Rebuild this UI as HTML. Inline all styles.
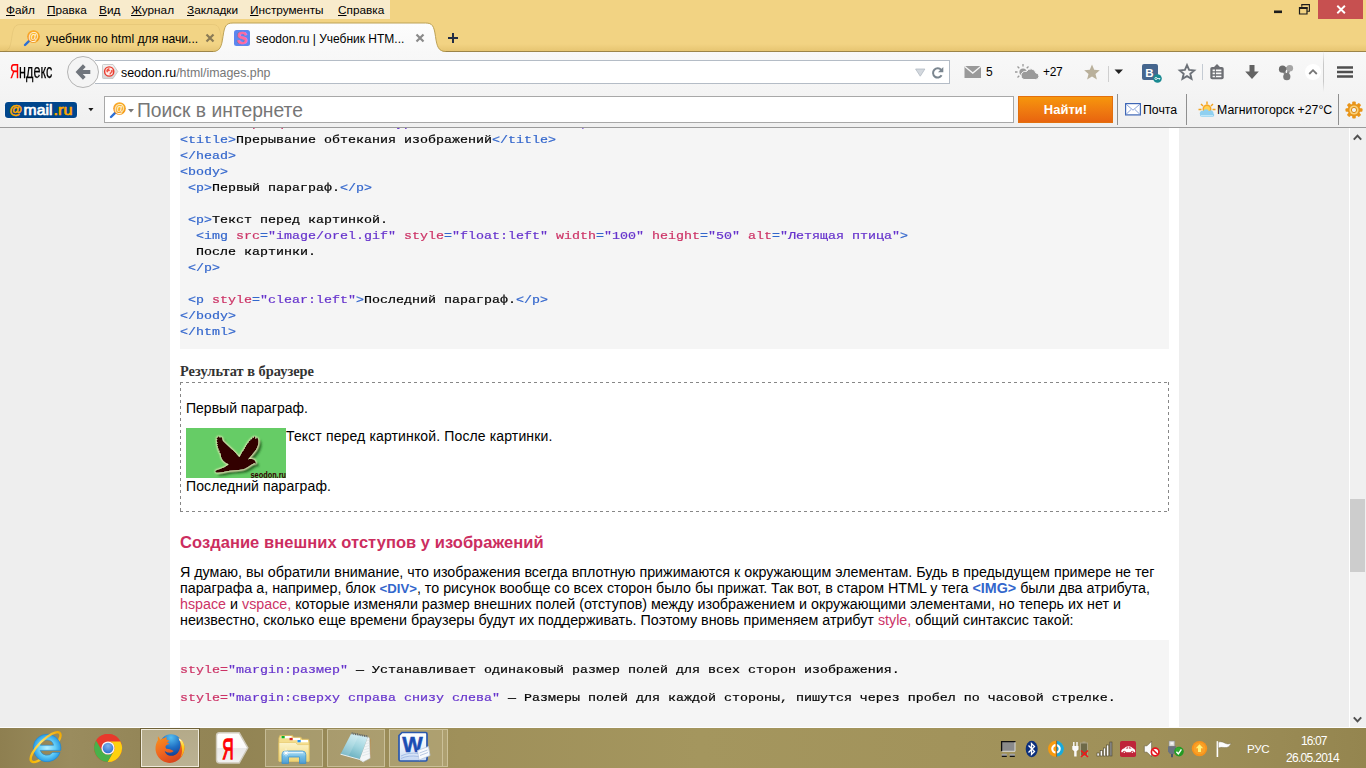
<!DOCTYPE html>
<html lang="ru">
<head>
<meta charset="utf-8">
<title>seodon.ru | Учебник HTML</title>
<style>
*{box-sizing:border-box;margin:0;padding:0}
html,body{width:1366px;height:768px;overflow:hidden;background:#f2d383;font-family:"Liberation Sans",sans-serif;}
.abs{position:absolute}
#titlebar{position:absolute;left:0;top:0;width:1366px;height:52px;background:#f2d383}
#menubar{position:absolute;left:0;top:0;width:390px;height:19px;background:#f8ebcc;font-size:11.8px;color:#000;white-space:nowrap}
#menubar span{position:absolute;top:3px;line-height:15px}
#menubar u{text-decoration:underline;text-underline-offset:1px}
#navbar{position:absolute;left:0;top:52px;width:1366px;height:41px;background:linear-gradient(180deg,#f8f8f8,#f4f4f4)}
#mailbar{position:absolute;left:0;top:93px;width:1366px;height:35px;background:linear-gradient(180deg,#f4f4f4,#f0f0f0);border-bottom:1px solid #9a9a9a}
#viewport{position:absolute;left:0;top:128px;width:1349px;height:600px;background:#eeeeee;overflow:hidden}
#col{position:absolute;left:170px;top:0;width:1009px;height:600px;background:#fff}
#scroll{position:absolute;left:1349px;top:128px;width:17px;height:600px;background:#f0f0f0;border-left:1px solid #fff}
#thumb{position:absolute;left:0;top:371px;width:15px;height:73px;background:#cdcdcd}
#taskbar{position:absolute;left:0;top:728px;width:1366px;height:40px;background:linear-gradient(90deg,#8e7f50 0,#9a8c5e 70px,#948658 140px,#928454 240px,#9f905a 460px,#a4965e 700px,#a2935b 950px,#9f9059 1150px,#998a54 1280px,#94854f 1366px)}
.code{position:absolute;left:10px;width:989px;background:#f5f5f5;font-family:"Liberation Mono",monospace;font-size:13.333px;line-height:16px;white-space:pre;color:#000}
.code .t{color:#3366cc}.code .a{color:#cc3366}.code .v{color:#6633cc}
.txt{position:absolute;white-space:nowrap;color:#000}
.ex{font-size:14px;line-height:16px}.p{font-size:14.29px;line-height:16px}.tg{color:#3366cc}.at{color:#cc3366}
.ui{font-size:12px;line-height:16px}
.tb{height:38px;background:rgba(255,250,225,.17);border:1px solid rgba(255,250,225,.36)}.tk{color:#fff;line-height:15px}
.ln{height:16px;-webkit-text-stroke:.22px;line-height:18.182px;transform:scaleY(.88);transform-origin:0 0}
</style>
</head>
<body>
<div id="titlebar"></div>
<div id="menubar">
<span style="left:6px"><u>Ф</u>айл</span>
<span style="left:47px"><u>П</u>равка</span>
<span style="left:99px"><u>В</u>ид</span>
<span style="left:131px"><u>Ж</u>урнал</span>
<span style="left:187px"><u>З</u>акладки</span>
<span style="left:250px"><u>И</u>нструменты</span>
<span style="left:338px"><u>С</u>правка</span>
</div>
<!--WINCTRL-->
<!--TABS-->
<!-- window controls -->
<div class="abs" style="left:1318px;top:0;width:45px;height:19px;background:#c75050"></div>
<svg class="abs" style="left:1266px;top:0" width="100" height="20" viewBox="0 0 100 20">
<rect x="8" y="10.5" width="8" height="2.6" fill="#1c1c1c"/>
<path d="M33.5 7.5h7.5v6.5h-7.5z M33.5 8.2h7.5" fill="none" stroke="#1c1c1c" stroke-width="1.2"/>
<rect x="33" y="7" width="8.5" height="2" fill="#1c1c1c"/>
<path d="M35.8 6.8V4.6h7.6v6.6h-2.2" fill="none" stroke="#1c1c1c" stroke-width="1.1"/>
<path d="M71.3 5.8l7.6 7.4M78.9 5.8l-7.6 7.4" stroke="#fff" stroke-width="1.9" fill="none"/>
</svg>
<!-- tab strip -->
<div class="abs" style="left:0;top:44px;width:1366px;height:7px;background:linear-gradient(180deg,rgba(226,190,105,0) 0%,rgba(222,186,100,.55) 100%)"></div>
<div class="abs" style="left:0;top:51px;width:1366px;height:1px;background:#9c8448"></div>
<svg class="abs" style="left:0;top:22px" width="480" height="30" viewBox="0 0 480 30">
<defs><linearGradient id="tg" x1="0" y1="0" x2="0" y2="1"><stop offset="0" stop-color="#fdfdfd"/><stop offset="1" stop-color="#f8f8f8"/></linearGradient></defs>
<path d="M3 29.5C10 29 10.5 24 12 14C13.5 5 15 2.5 21 2.5H212C218 2.5 219.500 5 221 14C222.500 24 223 29 230 29.500" fill="rgba(255,244,214,.03)" stroke="rgba(150,120,50,.10)" stroke-width="1"/>
<path d="M213 30C220 29.500 221.500 25 223 14.500C224.500 4 226 1 233 1H425.500C432.500 1 434 4 435.500 14.500C437 25 438.500 29.500 445.500 30Z" fill="url(#tg)"/>
<path d="M213 29.5C220 29 221.500 25 223 14.500C224.500 4 226 1 233 1H425.500C432.500 1 434 4 435.500 14.500C437 25 438.500 29 445.500 29.500" fill="none" stroke="#bda256" stroke-width="1"/>
</svg>
<svg class="abs" style="left:22px;top:29px" width="20" height="18" viewBox="0 0 20 18">
<defs><radialGradient id="og" cx=".45" cy=".35" r=".7"><stop offset="0" stop-color="#ffc037"/><stop offset="1" stop-color="#f08a10"/></radialGradient></defs>
<path d="M8.200 10.800L3 16" stroke="#2b6fd6" stroke-width="2.4" stroke-linecap="round"/>
<circle cx="11.500" cy="7.500" r="6.300" fill="url(#og)"/>
<text x="11.600" y="11" text-anchor="middle" font-family="Liberation Sans, sans-serif" font-weight="bold" font-size="10.500" fill="#fff8e0">@</text>
</svg>
<div class="txt ui" style="left:46px;top:31px;font-size:12.200px">учебник по html для начи...</div>
<svg class="abs" style="left:204px;top:32px" width="12" height="12" viewBox="0 0 12 12"><path d="M2.500 2.500l7 7M9.500 2.500l-7 7" stroke="#8a7a55" stroke-width="2.200"/></svg>
<div class="abs" style="left:234px;top:30px;width:16px;height:16px;border-radius:2.500px;background:#5c86f0"></div>
<div class="txt" style="left:234px;top:30px;width:16px;text-align:center;font-weight:bold;font-size:16px;line-height:18px;color:#ff6b9d;-webkit-text-stroke:.5px #ff6b9d">S</div>
<div class="txt ui" style="left:256px;top:31px">seodon.ru | Учебник HTM...</div>
<svg class="abs" style="left:414px;top:32px" width="12" height="12" viewBox="0 0 12 12"><path d="M2.500 2.500l7 7M9.500 2.500l-7 7" stroke="#8a8a8a" stroke-width="2.200"/></svg>
<svg class="abs" style="left:446px;top:31px" width="14" height="14" viewBox="0 0 14 14"><path d="M7 2v10M2 7h10" stroke="#222c44" stroke-width="2"/></svg>
<!--/TABS-->
<div id="navbar">
<!--NAV-->
<div class="txt" id="ya" style="left:9.500px;top:8px;font-size:20.500px;line-height:22px;transform:scaleX(.615);transform-origin:0 0;-webkit-text-stroke:.25px;color:#000"><span style="color:#f00">Я</span>ндекс</div>
<div class="abs" style="left:95px;top:8px;width:855px;height:24px;background:#fff;border:1px solid #b4bcc6;border-left:none"></div>
<div class="abs" style="left:67px;top:4px;width:32px;height:32px;border-radius:50%;background:#f4f4f4;border:1px solid #b4b4b4"></div>
<svg class="abs" style="left:74px;top:12px" width="18" height="16" viewBox="0 0 18 16"><path d="M10.300 1.600L4.200 8l6.100 6.400M5 8H16.300" fill="none" stroke="#70757c" stroke-width="3.800" stroke-linejoin="miter"/></svg>
<svg class="abs" style="left:102px;top:11px" width="17" height="17" viewBox="0 0 17 17">
<defs><linearGradient id="idg" x1="0" y1="0" x2="0" y2="1"><stop offset="0" stop-color="#f4f4f4"/><stop offset="1" stop-color="#d4d4d4"/></linearGradient></defs>
<path d="M1.500 1.500h9.500l4.800 7-4.800 7H1.500a1 1 0 0 1-1-1v-12a1 1 0 0 1 1-1z" fill="url(#idg)" stroke="#c2c2c2" stroke-width=".8"/>
<circle cx="7.200" cy="8.500" r="4.600" fill="#ffece8" stroke="#e8392c" stroke-width="1.400"/>
<path d="M4.300 7.300c.8-1.500 2-2.200 3.300-2.200l-.6 1.300 1.200.6-.8 1.300-1.300-.1-.4 1.400-1.200-.6zM8.800 7.400l1.700-.8c.4.900.4 2 0 3l-1.200.3-.3 1.400-1.500.2.200-1.700 1.200-.7z" fill="#ef5548"/>
</svg>
<div class="txt" style="left:121px;top:13px;font-size:12.400px;line-height:16px;color:#000">seodon.ru<span style="color:#777">/html/images.php</span></div>
<svg class="abs" style="left:913px;top:14px" width="34" height="14" viewBox="0 0 34 14">
<path d="M2.600 3h9.300l-4.650 7.200z" fill="#d3d8de" stroke="#b3bbc4" stroke-width=".8"/>
<path d="M28.600 9.300a4.600 4.600 0 1 1-.4-5.300" fill="none" stroke="#7b8690" stroke-width="2"/>
<path d="M30.300 1v5.300h-5.300z" fill="#7b8690"/>
</svg>
<!-- mail + 5 -->
<svg class="abs" style="left:964px;top:13px" width="18" height="14" viewBox="0 0 18 14"><rect x=".5" y="1" width="16.500" height="12" fill="#9a9a9a"/><path d="M.5 1.300l8.300 6.800 8.200-6.800" fill="none" stroke="#f6f6f6" stroke-width="1.300"/></svg>
<div class="txt" style="left:986px;top:12px;font-size:12px;line-height:16px">5</div>
<!-- weather -->
<svg class="abs" style="left:1014px;top:11px" width="26" height="18" viewBox="0 0 26 18">
<g stroke="#9a9a9a" stroke-width="1.300"><path d="M9 1v2.500M3.500 3.500l1.800 1.800M14.500 3.500l-1.800 1.800M1 9h2.500M3.500 14.500l1.800-1.800"/></g>
<circle cx="9" cy="9" r="3.600" fill="#9a9a9a"/>
<path d="M10 16.500h11.500a3.300 3.300 0 0 0 .3-6.600 5 5 0 0 0-9.300-1.400 4 4 0 0 0-2.500 8z" fill="#9a9a9a" stroke="#f6f6f6" stroke-width="1"/>
</svg>
<div class="txt" style="left:1043px;top:12px;font-size:12px;line-height:16px;letter-spacing:-.3px">+27</div>
<svg class="abs" style="left:1083px;top:11px" width="18" height="18" viewBox="0 0 18 18"><path d="M9 1.500l2.200 5.300 5.600.4-4.300 3.700 1.400 5.600L9 13.400l-4.900 3.100 1.400-5.600L1.200 7.200l5.600-.4z" fill="#b9b09b"/></svg>
<div class="abs" style="left:1108px;top:14px;width:1px;height:16px;background:#cfcfcf"></div>
<svg class="abs" style="left:1114px;top:17px" width="10" height="6" viewBox="0 0 10 6"><path d="M.5 .5h8.500l-4.250 4.500z" fill="#222"/></svg>
<!-- VK -->
<div class="abs" style="left:1142px;top:12px;width:16px;height:16px;border-radius:2px;background:#45668e"></div>
<div class="txt" style="left:1142px;top:13px;width:15px;text-align:center;font-weight:bold;font-size:11.500px;line-height:16px;color:#fff">B</div>
<svg class="abs" style="left:1153px;top:22px" width="9" height="9" viewBox="0 0 9 9"><circle cx="4.500" cy="4.500" r="4.300" fill="#1a8a92"/><circle cx="3" cy="4.500" r="1.100" fill="none" stroke="#fff" stroke-width=".8"/><path d="M4 4.500h3.300M6.400 4.500v1.200" stroke="#fff" stroke-width=".8"/></svg>
<svg class="abs" style="left:1177px;top:10px" width="20" height="20" viewBox="0 0 20 20"><path d="M10 3.200l2.100 4.700 5.100.5-3.900 3.400 1.200 5-4.500-2.700-4.500 2.700 1.200-5L2.800 8.400l5.100-.5z" fill="none" stroke="#6c7178" stroke-width="1.900" stroke-linejoin="miter"/></svg>
<div class="abs" style="left:1202px;top:12px;width:1px;height:16px;background:#c4cbd3"></div>
<svg class="abs" style="left:1209px;top:12px" width="16" height="17" viewBox="0 0 16 17"><rect x="1.300" y="3" width="13.400" height="12.200" rx="1.800" fill="#6c6e73"/><path d="M4.800 3.200L8 0l3.200 3.200z" fill="#6c6e73"/><path d="M3.600 6.300h8.800M3.600 9.400h8.800M3.600 12.500h8.800" stroke="#fafafa" stroke-width="1.700"/><path d="M6.400 5v8.500" stroke="#6c6e73" stroke-width="1"/></svg>
<svg class="abs" style="left:1244px;top:12px" width="16" height="16" viewBox="0 0 16 16"><path d="M5.500 1h5v6.500h4.300L8 15 1.200 7.500h4.300z" fill="#636363"/></svg>
<svg class="abs" style="left:1278px;top:12px" width="17" height="17" viewBox="0 0 17 17"><path d="M4.500 5l7-1M4.500 5l4.500 8M11.500 4l-2.500 9" stroke="#8a8a8a" stroke-width="2.500"/><circle cx="4.500" cy="5.200" r="3.600" fill="#6c6c6c"/><circle cx="11.800" cy="4.300" r="3.300" fill="#a5a5a5"/><circle cx="8.800" cy="12.700" r="3.600" fill="#7a7a7a"/></svg>
<div class="abs" style="left:1305px;top:12px;width:16px;height:16px;border-radius:50%;background:#fff"></div>
<svg class="abs" style="left:1308px;top:16px" width="10" height="8" viewBox="0 0 10 8"><path d="M1.200 6l3.800-3.800L8.800 6" fill="none" stroke="#777" stroke-width="1.800"/></svg>
<div class="abs" style="left:1323px;top:-30px;width:1px;height:70px;background:linear-gradient(180deg,rgba(170,170,170,0) 0%,rgba(170,170,170,0) 40%,#c8c8c8 60%,#c8c8c8 85%,rgba(200,200,200,0) 100%)"></div>
<svg class="abs" style="left:1337px;top:13px" width="16" height="14" viewBox="0 0 16 14"><path d="M0 2.500h16M0 7h16M0 11.500h16" stroke="#4f4f4f" stroke-width="2.600" stroke-linecap="round"/></svg>
<!--/NAV-->
</div>
<div id="mailbar">
<!--MAIL-->
<svg class="abs" id="mlogo" style="left:3px;top:7px" width="77" height="20" viewBox="0 0 77 20">
<rect x="1.500" y="1.500" width="73" height="17" rx="3.500" fill="#fff" opacity=".75"/>
<rect x="2" y="2" width="72" height="16" rx="3.200" fill="#00468c"/>
<g font-family="Liberation Sans, sans-serif" stroke-linejoin="round">
<text x="6.600" y="14.200" font-size="13.200" font-weight="bold" fill="#ffa800" stroke="#ffa800" stroke-width=".5" textLength="12.600" lengthAdjust="spacingAndGlyphs">@</text>
<text x="20.600" y="14.800" font-size="14.800" fill="#fff" stroke="#fff" stroke-width=".7" textLength="28.800" lengthAdjust="spacingAndGlyphs">mail</text>
<text x="50.600" y="14.800" font-size="14.800" fill="#ffa800" stroke="#ffa800" stroke-width=".7" textLength="19" lengthAdjust="spacingAndGlyphs">.ru</text>
</g></svg>
<svg class="abs" style="left:88px;top:15px" width="6" height="4" viewBox="0 0 6 4"><path d="M.3 0h5.200L2.900 3.200z" fill="#1a1a1a"/></svg>
<div class="abs" style="left:104px;top:3px;width:910px;height:27px;background:#fff;border:1px solid #a8a8a8"></div>
<svg class="abs" style="left:108px;top:8px" width="20" height="18" viewBox="0 0 20 18">
<path d="M8.200 10.800L3 16" stroke="#2b6fd6" stroke-width="2.400" stroke-linecap="round"/>
<circle cx="11.500" cy="7.500" r="6.300" fill="url(#og)"/>
<text x="11.600" y="11" text-anchor="middle" font-family="Liberation Sans, sans-serif" font-weight="bold" font-size="10.500" fill="#fff8e0">@</text>
</svg>
<svg class="abs" style="left:128px;top:16px" width="6" height="4" viewBox="0 0 6 4"><path d="M0 0h6L3 3.500z" fill="#777"/></svg>
<div class="txt" style="left:137px;top:6px;font-size:19.300px;line-height:24px;color:#767676">Поиск в интернете</div>
<div class="abs" style="left:1018px;top:3px;width:95px;height:27px;background:linear-gradient(180deg,#f6960c 0%,#ef7a10 55%,#e8640f 100%);border:1px solid #e2700e"></div>
<div class="txt" style="left:1018px;top:8px;width:95px;text-align:center;font-weight:bold;font-size:13px;line-height:17px;color:#fff">Найти!</div>
<div class="abs" style="left:1117px;top:1px;width:1px;height:31px;background:#8f8f8f"></div>
<svg class="abs" style="left:1125px;top:10px" width="16" height="13" viewBox="0 0 16 13"><rect x=".6" y=".6" width="14.800" height="11.300" fill="#fff" stroke="#3d66b5" stroke-width="1.200"/><path d="M.8 .9l7.200 6.300 7.200-6.300M.8 11.600l5.400-5.200M15.200 11.600L9.800 6.400" fill="none" stroke="#7d9bd6" stroke-width=".9"/></svg>
<div class="txt" style="left:1143px;top:9px;font-size:12.300px;line-height:16px">Почта</div>
<div class="abs" style="left:1186px;top:1px;width:1px;height:31px;background:#8f8f8f"></div>
<svg class="abs" style="left:1198px;top:8px" width="18" height="17" viewBox="0 0 18 17">
<g stroke="#f2a21a" stroke-width="1.400"><path d="M9 .5v3M3 3l2 2M15 3l-2 2M.5 8.500h3M17.500 8.500h-3"/></g>
<circle cx="9" cy="8" r="4.500" fill="#f7a823"/><circle cx="9" cy="8" r="3" fill="#ffd257"/>
<path d="M2 13.500a2.500 2.500 0 0 1 3-3.500 3.300 3.300 0 0 1 6 .3 2.600 2.600 0 0 1 4.500 2.200 2 2 0 0 1-1 3.500H4a2.200 2.200 0 0 1-2-2.500z" fill="#8fd0f0"/>
<path d="M3 14.800h12" stroke="#c9ecfb" stroke-width="1.200"/>
</svg>
<div class="txt" style="left:1217px;top:9px;font-size:12.300px;line-height:16px">Магнитогорск +27°C</div>
<div class="abs" style="left:1338px;top:1px;width:1px;height:31px;background:#8f8f8f"></div>
<svg class="abs" style="left:1345px;top:8px" width="18" height="18" viewBox="0 0 18 18">
<g transform="translate(9 9)"><g fill="#e8951a">
<rect x="-1.800" y="-8.500" width="3.600" height="17" rx="1"/><rect x="-1.800" y="-8.500" width="3.600" height="17" rx="1" transform="rotate(45)"/><rect x="-1.800" y="-8.500" width="3.600" height="17" rx="1" transform="rotate(90)"/><rect x="-1.800" y="-8.500" width="3.600" height="17" rx="1" transform="rotate(135)"/></g>
<circle r="6.300" fill="#e8951a"/><circle r="4.600" fill="#fbd27a"/><circle r="2.600" fill="#f1f1f1" stroke="#d98a14" stroke-width="1"/></g>
</svg>
<!--/MAIL-->
</div>
<div id="viewport">
<div id="col">
<!--PAGE-->
<div class="code" style="top:-39px;padding:11px 0 9px 0;height:260px"><div class="ln"><span class="t">&lt;head&gt;</span></div><div class="ln"><span class="t">&lt;meta</span> <span class="a">http-equiv</span><span class="t">=</span><span class="v">"Content-Type"</span> <span class="a">content</span><span class="t">=</span><span class="v">"text/html; charset=utf-8"</span><span class="t">&gt;</span></div><div class="ln"><span class="t">&lt;title&gt;</span>Прерывание обтекания изображений<span class="t">&lt;/title&gt;</span></div><div class="ln"><span class="t">&lt;/head&gt;</span></div><div class="ln"><span class="t">&lt;body&gt;</span></div><div class="ln"> <span class="t">&lt;p&gt;</span>Первый параграф.<span class="t">&lt;/p&gt;</span></div><div class="ln">&#160;</div><div class="ln"> <span class="t">&lt;p&gt;</span>Текст перед картинкой.</div><div class="ln">  <span class="t">&lt;img</span> <span class="a">src</span><span class="t">=</span><span class="v">"image/orel.gif"</span> <span class="a">style</span><span class="t">=</span><span class="v">"float:left"</span> <span class="a">width</span><span class="t">=</span><span class="v">"100"</span> <span class="a">height</span><span class="t">=</span><span class="v">"50"</span> <span class="a">alt</span><span class="t">=</span><span class="v">"Летящая птица"</span><span class="t">&gt;</span></div><div class="ln">  После картинки.</div><div class="ln"> <span class="t">&lt;/p&gt;</span></div><div class="ln">&#160;</div><div class="ln"> <span class="t">&lt;p</span> <span class="a">style</span><span class="t">=</span><span class="v">"clear:left"</span><span class="t">&gt;</span>Последний параграф.<span class="t">&lt;/p&gt;</span></div><div class="ln"><span class="t">&lt;/body&gt;</span></div><div class="ln"><span class="t">&lt;/html&gt;</span></div></div>
<div class="txt" id="res" style="left:10px;top:235px;font-family:'Liberation Serif',serif;font-weight:bold;font-size:14.4px;line-height:16px;color:#333">Результат в браузере</div>
<div class="abs" id="dash" style="left:10px;top:254px;width:989px;height:130px;background:repeating-linear-gradient(90deg,#878787 0,#878787 3px,transparent 3px,transparent 6px) 0 0/100% 1px no-repeat,repeating-linear-gradient(90deg,#878787 0,#878787 3px,transparent 3px,transparent 6px) 0 100%/100% 1px no-repeat,repeating-linear-gradient(180deg,#878787 0,#878787 3px,transparent 3px,transparent 6px) 0 0/1px 100% no-repeat,repeating-linear-gradient(180deg,#878787 0,#878787 3px,transparent 3px,transparent 6px) 100% 0/1px 100% no-repeat"></div>
<div class="txt ex" style="left:16px;top:272px">Первый параграф.</div>
<div class="txt ex" style="left:116px;top:300px;letter-spacing:.135px">Текст перед картинкой. После картинки.</div>
<div class="txt ex" style="left:16px;top:350px;letter-spacing:.11px">Последний параграф.</div>
<svg class="abs" id="bird" style="left:16px;top:300px" width="100" height="50" viewBox="0 0 100 50">
<defs><filter id="bsh" x="-20%" y="-20%" width="150%" height="150%"><feGaussianBlur in="SourceAlpha" stdDeviation="1.3" result="b"/><feOffset in="b" dx="3" dy="3" result="o"/><feFlood flood-color="#1f5a1f" flood-opacity=".85"/><feComposite in2="o" operator="in" result="sh"/><feGaussianBlur in="SourceAlpha" stdDeviation=".9" result="g"/><feFlood flood-color="#f4f7c0" flood-opacity="1"/><feComposite in2="g" operator="in" result="gl"/><feMerge><feMergeNode in="sh"/><feMergeNode in="gl"/><feMergeNode in="gl"/><feMergeNode in="SourceGraphic"/></feMerge></filter></defs>
<rect width="100" height="50" fill="#66cc66"/>
<path filter="url(#bsh)" fill="#330000" d="M30.700 8.100L31.600 9.800L32.400 7.800L33.300 9.600L34 7.900L34.800 9.500L35.600 8.800L36.300 10.200C36.600 11.800 36.900 12.600 37.600 13.500C40 16 44 19.500 47.600 22.700C49.800 24.800 51.800 27 53.400 28.900C54.500 27 55.600 25 56.500 23.300L57.400 22.600L57.600 21.400L58.600 20.700L58.800 19.300L59.800 18.600L60 17.200L61 16.500L61.300 15.200L62.400 14.500L62.900 13.100L64 12.400L64.700 10.700L65.600 11.200L66.800 8.800L67.500 10L68.800 7.800C69.400 8.800 69.600 9.800 69.700 11L71 8.900C71.800 9.800 72.300 11 72.500 12.600C72.700 15.500 72 18.500 70.300 21.300C68.400 24.300 66 27 62.300 31.300C63.600 30.900 65 30.900 66.200 31.100C67.500 31.300 68.500 31.800 69.100 32.700C69.600 33.400 69.900 34.200 69.900 34.800L69.700 36.100L68.700 35.300C67.500 35.500 66.700 36 65.500 36.800C63.500 38.200 61.500 39.600 59 40.700C57 41.500 55.500 41.800 53 42C49.500 42.200 45 42.500 41 43.200C38 43.800 35 44.600 32.200 44.800C30.500 44.900 29.300 44.500 29.200 43.600C29.100 42.700 30 42.300 32 41.600C34.500 40.800 36.800 40 38.500 39C40 38.100 41.500 37.200 42.500 36.200C40.500 35.500 38.800 34.500 37.500 33.200C36 31.700 35.200 30 34.900 28C34.700 26.800 34.700 26 34.400 25.400L33 24.200L33.600 23L32 22.200L32.700 21L31.300 20L32.100 18.800L30.800 17.800L31.700 16.600L30.500 15.400L31.400 14.200L30.300 12.800L31.300 11.700L30.300 10.300L31.200 9.600Z"/>
<text x="100" y="49.900" text-anchor="end" font-family="Liberation Sans, sans-serif" font-size="9.600" font-weight="bold" fill="#330000" textLength="35.500" lengthAdjust="spacingAndGlyphs">seodon.ru</text>
</svg>
<div class="txt" id="h2" style="left:10px;top:404px;font-weight:bold;font-size:16.5px;letter-spacing:.05px;line-height:20px;color:#cc2d5f">Создание внешних отступов у изображений</div>
<div class="txt p" style="left:10px;top:436px">Я думаю, вы обратили внимание, что изображения всегда вплотную прижимаются к окружающим элементам. Будь в предыдущем примере не тег</div>
<div class="txt p" style="left:10px;top:452px">параграфа а, например, блок <b class="tg" style="font-size:13.200px">&lt;DIV&gt;</b>, то рисунок вообще со всех сторон было бы прижат. Так вот, в старом HTML у тега <b class="tg">&lt;IMG&gt;</b> были два атрибута,</div>
<div class="txt p" style="left:10px;top:468px"><span class="at">hspace</span> и <span class="at">vspace,</span> которые изменяли размер внешних полей (отступов) между изображением и окружающими элементами, но теперь их нет и</div>
<div class="txt p" style="left:10px;top:484px">неизвестно, сколько еще времени браузеры будут их поддерживать. Поэтому вновь применяем атрибут <span class="at">style,</span> общий синтаксис такой:</div>
<div class="code" style="top:512px;height:120px"><div class="ln">&#160;</div></div>
<div class="code" style="top:534px;background:none"><div class="ln"><span class="a">style=</span><span class="v">"margin:размер"</span> — Устанавливает одинаковый размер полей для всех сторон изображения.</div></div>
<div class="code" style="top:562px;background:none"><div class="ln"><span class="a">style=</span><span class="v">"margin:сверху справа снизу слева"</span> — Размеры полей для каждой стороны, пишутся через пробел по часовой стрелке.</div></div>
<!--/PAGE-->
</div>
</div>
<div id="scroll"><div id="thumb"></div>
<!--SCROLLARROWS-->
<svg class="abs" style="left:3px;top:5px" width="9" height="8" viewBox="0 0 9 8"><path d="M.8 6.600L4.500 2.600L8.200 6.600" fill="none" stroke="#505050" stroke-width="2"/></svg>
<svg class="abs" style="left:3px;top:588px" width="9" height="8" viewBox="0 0 9 8"><path d="M.8 1.400L4.500 5.400L8.200 1.400" fill="none" stroke="#505050" stroke-width="2"/></svg>

</div>
<div class="abs" style="left:0;top:727px;width:1366px;height:1px;background:#fdfdfd"></div>
<div id="taskbar">
<!--TASK-->
<!-- buttons -->
<div class="abs" style="left:141px;top:1px;width:58px;height:38px;background:linear-gradient(180deg,#b4aa89,#bbb293);border:1px solid #efeadb;box-shadow:0 0 0 1px #6f6137"></div>
<div class="abs tb" style="left:265px;top:1px;width:58px"></div>
<div class="abs tb" style="left:327px;top:1px;width:58px"></div>
<div class="abs tb" style="left:389px;top:1px;width:54px"></div>
<div class="abs tb" style="left:443px;top:1px;width:5px;border-left:none"></div>
<!-- IE -->
<svg class="abs" style="left:28px;top:2px" width="40" height="38" viewBox="0 0 40 38">
<defs><radialGradient id="ieb" cx=".5" cy=".5" r=".55"><stop offset="0" stop-color="#b6f0ff"/><stop offset=".55" stop-color="#63cdf7"/><stop offset="1" stop-color="#1a8fe0"/></radialGradient>
<linearGradient id="ieg" x1="0" y1="1" x2="1" y2="0"><stop offset="0" stop-color="#f7b500"/><stop offset=".5" stop-color="#ffe266"/><stop offset="1" stop-color="#f2a900"/></linearGradient></defs>
<path d="M31.640 2.860A20 6.800 -45 0 1 28.740 14.100M14.600 28.240A20 6.800 -45 0 1 3.360 31.140" fill="none" stroke="url(#ieg)" stroke-width="2.400"/>
<path transform="translate(19 18) scale(1.200) translate(-18 -18)" d="M18 6.500a11.500 11.500 0 1 0 10.900 15.200h-6.200a6 6 0 0 1-10.400-1.700h17.100a11.500 11.500 0 0 0-11.400-13.500zm-5.600 9.200a5.700 5.700 0 0 1 11.100 0z" fill="url(#ieb)" stroke="#1b86d6" stroke-width=".5"/>
<path d="M3.360 31.140A20 6.800 -45 0 1 31.640 2.860" fill="none" stroke="url(#ieg)" stroke-width="2.400"/>
</svg>
<!-- Chrome -->
<svg class="abs" style="left:93px;top:5px" width="30" height="30" viewBox="0 0 30 30">
<defs><radialGradient id="chb" cx=".5" cy=".3" r=".7"><stop offset="0" stop-color="#7fb4ee"/><stop offset="1" stop-color="#2f6fd0"/></radialGradient></defs>
<circle cx="15" cy="15" r="14" fill="#e8392c"/>
<path d="M15.00 8.40 L27.35 8.40 A14 14 0 0 0 3.11 7.61 L9.28 18.30 A6.6 6.6 0 0 1 15.00 8.40 Z" fill="#e8392c"/>
<path d="M20.72 18.30 L14.54 28.99 A14 14 0 0 0 27.35 8.40 L15.00 8.40 A6.6 6.6 0 0 1 20.72 18.30 Z" fill="#fdd10f"/>
<path d="M9.28 18.30 L3.11 7.61 A14 14 0 0 0 14.54 28.99 L20.72 18.30 A6.6 6.6 0 0 1 9.28 18.30 Z" fill="#48b14a"/>
<circle cx="15" cy="15" r="6.600" fill="#f7f7f7"/><circle cx="15" cy="15" r="5.300" fill="url(#chb)"/>
</svg>
<!-- Firefox -->
<svg class="abs" style="left:154px;top:4px" width="32" height="32" viewBox="0 0 32 32">
<defs><radialGradient id="ffb" cx=".5" cy=".15" r=".9"><stop offset="0" stop-color="#55bff0"/><stop offset=".5" stop-color="#1f6fc4"/><stop offset="1" stop-color="#12348a"/></radialGradient>
<linearGradient id="ffo" x1="0" y1="0" x2=".6" y2="1"><stop offset="0" stop-color="#f7941d"/><stop offset=".55" stop-color="#f0661f"/><stop offset="1" stop-color="#d8431c"/></linearGradient>
<linearGradient id="fft" x1="0" y1="0" x2="0" y2="1"><stop offset="0" stop-color="#fff3a0"/><stop offset=".4" stop-color="#ffd21f"/><stop offset="1" stop-color="#f48a1b"/></linearGradient></defs>
<circle cx="17" cy="13.500" r="11.300" fill="url(#ffb)"/>
<path d="M4 4.300C5.200 5.600 5.800 6.600 6.300 7.800C7.600 6.700 9.300 6 10.800 5.900C11.300 5.400 11.900 5 12.400 4.800C12.200 6 12.400 7 13 7.900C13.800 8 15 8.300 15.800 9C14.600 9.300 13.600 9.800 13 10.600C14 10.800 15 11.400 15.300 12.200C13.800 12.100 12.500 12.800 11.800 13.800C11.300 14.800 11.500 16 12.300 16.700C14 16.500 16.500 17.200 19.600 19C18.700 20.200 16.800 20.800 14.800 20.600C13.200 20.400 11.700 19.700 10.700 18.700C11 20.600 12.500 22.600 14.800 23.400C18 24.500 21.800 23.200 24 20.400C26 17.800 26.800 14 26.200 10.500C25.900 8.800 25.400 7.300 24.600 6.200C26.400 6.800 28 8.200 29 10C30.400 12.500 30.800 15.600 30.200 18.600C29.300 23.200 26.200 27.500 21.800 29.600C17.600 31.600 12.400 31.300 8.400 28.800C4.400 26.300 1.700 21.800 1.500 17C1.400 13.800 2.300 10.600 4 8C3.700 6.800 3.700 5.500 4 4.300Z" fill="url(#ffo)"/>
<path d="M24.600 6.200C26.400 6.800 28 8.200 29 10C30.400 12.500 30.800 15.600 30.200 18.600C29.600 21.600 28 24.500 25.800 26.700C27.600 23.600 28.300 20 27.900 16.500C27.500 12.600 26.400 8.800 24.600 6.200Z" fill="url(#fft)"/>
<path d="M24.800 6.400C26 7 27 8 27.700 9.200C26.900 8.800 26.200 8.700 25.600 8.800Z" fill="#fff" opacity=".9"/>
</svg>
<!-- Yandex -->
<svg class="abs" style="left:215px;top:3px" width="35" height="34" viewBox="0 0 35 34">
<defs><linearGradient id="yag" x1="0" y1="0" x2="0" y2="1"><stop offset="0" stop-color="#ffffff"/><stop offset=".5" stop-color="#fbfbfb"/><stop offset=".5" stop-color="#e9e9e9"/><stop offset="1" stop-color="#f2f2f2"/></linearGradient></defs>
<path d="M4.500 1.800H24.200L32.800 16.800L24.200 32H4.500A3 3 0 0 1 1.500 29V4.800A3 3 0 0 1 4.500 1.800Z" fill="url(#yag)" stroke="#cfcabb" stroke-width="1.400"/>
<text x="7.300" y="27.800" font-family="Liberation Sans, sans-serif" font-size="29" fill="#ff0000" stroke="#ff0000" stroke-width="1.300" textLength="11.400" lengthAdjust="spacingAndGlyphs">Я</text>
</svg>
<!-- Explorer -->
<svg class="abs" style="left:278px;top:6px" width="33" height="31" viewBox="0 0 33 31">
<defs><linearGradient id="fdg" x1="0" y1="0" x2="0" y2="1"><stop offset="0" stop-color="#fcf4cc"/><stop offset="1" stop-color="#f0d574"/></linearGradient>
<linearGradient id="stg" x1="0" y1="0" x2="0" y2="1"><stop offset="0" stop-color="#b4e2fa"/><stop offset=".45" stop-color="#6cbcec"/><stop offset="1" stop-color="#4a9cd8"/></linearGradient></defs>
<path d="M.8 4.200L1.800 1.500H14.500L15.500 3.200H23L24 5.200H30.500L31.300 7.500V27H.8Z" fill="#f4dd8c" stroke="#d8b85a" stroke-width=".7"/>
<rect x="3" y="2" width="10.500" height="2.300" fill="#fff"/><rect x="3.500" y="2" width="3.200" height="2.300" fill="#14b01f"/>
<rect x="11.500" y="3.900" width="10.500" height="2.300" fill="#fff"/><rect x="11.500" y="3.900" width="3.200" height="2.300" fill="#d62a20"/>
<rect x="19.500" y="6" width="10.500" height="2.300" fill="#fff"/><rect x="19.500" y="6" width="3.200" height="2.300" fill="#1e90f0"/>
<path d="M1 8.500H17.500L19.500 10.600H31V27.400H1Z" fill="url(#fdg)" stroke="#e6c96c" stroke-width=".7"/>
<path d="M4 29.400V20.500a3.500 3.500 0 0 1 3.500-3.500h16.800a3.500 3.500 0 0 1 3.500 3.500v8.900h-6.300v-6.400H10.500v6.400z" fill="url(#stg)" stroke="#3590d2" stroke-width=".8" opacity=".95"/>
<path d="M6.500 18.600h18.500" stroke="#eaf8ff" stroke-width="1.200" opacity=".85"/>
<path d="M8 14.500v8M4.500 19h7M5.800 16.800l4.400 4.400M10.200 16.800l-4.400 4.400" stroke="#fff" stroke-width=".6" opacity=".9"/><circle cx="8" cy="19" r="1.300" fill="#fff"/>
</svg>
<!-- Notepad -->
<svg class="abs" style="left:339px;top:4px" width="34" height="33" viewBox="0 0 34 33">
<defs><linearGradient id="npg" x1=".7" y1="0" x2=".2" y2="1"><stop offset="0" stop-color="#d4eef4"/><stop offset=".45" stop-color="#9fd4de"/><stop offset="1" stop-color="#5aa5b6"/></linearGradient></defs>
<path d="M30.400 6L31.900 7.200L32.100 26L31.200 26.300Z" fill="#b5935a"/>
<path d="M28.800 4.800L30.400 6L31.200 26.200L24.400 29.800L20.400 27.400Z" fill="#f4f6f7" stroke="#b9c2c6" stroke-width=".5"/>
<path d="M27.200 9l3.400-1M26.400 12l4.300-1.400M25.500 15l5.300-1.700M24.600 18l6.300-2M23.700 21l7.200-2.300M22.800 24l8.200-2.600" stroke="#cfd8dc" stroke-width=".5"/>
<path d="M12.300 1.600L28.800 4.800L20.400 27.400L1.500 22.200Z" fill="url(#npg)"/>
<path d="M12.300 1.600L20 3.100L9.500 24.400L1.500 22.200Z" fill="#fff" opacity=".16"/>
<path d="M1.500 22.200L20.400 27.400L24.400 29.800" fill="none" stroke="#e8eef0" stroke-width="1"/>
<path d="M12.600 1.300L28.900 4.500" stroke="#5c6468" stroke-width="2" stroke-dasharray="1 .8"/>
</svg>
<!-- Word -->
<svg class="abs" style="left:398px;top:3px" width="33" height="32" viewBox="0 0 33 32">
<defs><linearGradient id="wdg" x1="0" y1="0" x2="0" y2="1"><stop offset="0" stop-color="#ffffff"/><stop offset=".55" stop-color="#eaf1fb"/><stop offset="1" stop-color="#c4d6f2"/></linearGradient></defs>
<path d="M4 1.500H27.500A1.500 1.500 0 0 1 29 3V28.500A1.500 1.500 0 0 1 27.500 30H2.500A1.500 1.500 0 0 1 1 28.500V4.500Z" fill="url(#wdg)" stroke="#2a58ad" stroke-width="1.700"/>
<text x="4.300" y="21" font-family="Liberation Sans, sans-serif" font-weight="bold" font-size="21.500" fill="#1b4db3" stroke="#1b4db3" stroke-width=".5" textLength="20.500" lengthAdjust="spacingAndGlyphs">W</text>
<path d="M19.500 19.500L30.500 15.500L32 24.500L21 29Z" fill="#f9fbfe" stroke="#b9c8e0" stroke-width=".8"/>
<path d="M3 25c5-2.500 11-3.500 17-2.500M3 27.500c5-2.500 11-3 17.500-2" stroke="#9fb9e3" stroke-width=".9" fill="none"/>
<path d="M21.500 22l8-3M22 24.500l8-3" stroke="#a9bcdc" stroke-width=".8"/>
</svg>
<!-- tray -->
<svg class="abs" style="left:996px;top:10px" width="240" height="22" viewBox="0 0 240 22">
<!-- touch keyboard -->
<rect x="5.500" y="3.500" width="13.500" height="9.500" fill="#8b8b8b"/><path d="M19 4v9.300H5.500" fill="none" stroke="#d9d9d9" stroke-width="1"/><path d="M5.600 13.200V3.600H19.500" fill="none" stroke="#111" stroke-width="1.300"/><rect x="5.500" y="15.800" width="5.500" height="2.200" rx=".8" fill="#a2a2a2"/><rect x="13.500" y="15.800" width="5.500" height="2.200" rx=".8" fill="#a2a2a2"/><path d="M5.800 18.400h5M13.800 18.400h5" stroke="#111" stroke-width="1.100"/>
<!-- bluetooth -->
<ellipse cx="35.700" cy="11" rx="6" ry="8.200" fill="#0b2f7c"/><path d="M32.500 7.500l6 6-3 3v-11l3 3-6 6" fill="none" stroke="#fff" stroke-width="1.300"/>
<!-- orange-blue -->
<circle cx="60" cy="10.800" r="8" fill="#f79a0e"/><path d="M60 2.800a8 8 0 0 1 0 16z" fill="#19a9dc"/><circle cx="60" cy="10.800" r="3.700" fill="none" stroke="#fff" stroke-width="2.200"/><path d="M60.600 2.800v16" stroke="#8a5a2a" stroke-width="1"/><path d="M59.700 2.800v16" stroke="#f79a0e" stroke-width=".8"/>
<!-- power -->
<path d="M77.800 4v4M81 4v4" stroke="#fafafa" stroke-width="1.400"/><path d="M76.300 8h6.200v3.500l-1.900 1.800v5.200h-2.400v-5.200l-1.900-1.800z" fill="#fafafa"/>
<rect x="84.500" y="5" width="7" height="13" fill="#6e6a48" stroke="#aaa283" stroke-width="1"/><rect x="86.500" y="3.500" width="3" height="1.500" fill="#aaa283"/><path d="M85 12.500l7 6.500M92 12.500l-7 6.500" stroke="#f01818" stroke-width="1.700"/>
<!-- signal -->
<g fill="#fafafa" stroke="#4d4630" stroke-width=".6"><rect x="101" y="15" width="2.200" height="3"/><rect x="104.200" y="12.500" width="2.200" height="5.500"/><rect x="107.400" y="10" width="2.200" height="8"/><rect x="110.600" y="7" width="2.200" height="11"/></g><rect x="113.800" y="4" width="2.200" height="14" fill="#8a8a8a" stroke="#4d4630" stroke-width=".6"/>
<!-- red car -->
<rect x="124" y="3" width="16" height="16" rx="1.800" fill="#bf2439"/><path d="M125.300 13.400c0-1.800 1.200-2.600 2.800-2.900 1.300-1.600 2.800-2.300 4.400-2.300s3.200.7 4.600 2.300c1.300.3 2.100 1.100 2.100 2.900v.9h-13.900z" fill="#fff"/><path d="M129.600 10.600c.8-.9 1.600-1.300 2.500-1.300v1.300zM132.900 9.300c1 0 1.900.4 2.700 1.300h-2.700z" fill="#bf2439"/><circle cx="128.300" cy="14.200" r="1.500" fill="#bf2439"/><circle cx="136.300" cy="14.200" r="1.500" fill="#bf2439"/><circle cx="128.300" cy="14.200" r=".7" fill="#fff"/><circle cx="136.300" cy="14.200" r=".7" fill="#fff"/>
<!-- speaker muted -->
<path d="M148.300 7.800h2.700l4.600-4.600v15.600l-4.600-4.600h-2.700z" fill="#fafafa" stroke="#5f5636" stroke-width=".6"/><circle cx="159.200" cy="14" r="3.800" fill="#fff" stroke="#e8141c" stroke-width="1.700"/><path d="M156.600 11.500l5.200 5" stroke="#e8141c" stroke-width="1.700"/>
<!-- usb -->
<rect x="173" y="3" width="5.800" height="5.200" fill="#dcdcdc" stroke="#8a8a8a" stroke-width=".6"/><rect x="174.600" y="4.400" width="2.600" height="2" fill="#f6f6f6"/><path d="M172 8.200h8v5.300l-2 2.500h-4l-2-2.500z" fill="#6b7280"/><path d="M176 16v3.200" stroke="#4a5568" stroke-width="2"/><circle cx="183" cy="13.600" r="4.800" fill="#239a23"/><circle cx="182.300" cy="12.600" r="3" fill="#3cb83c" opacity=".6"/><path d="M180.400 13.800l1.900 2 3.100-4.400" fill="none" stroke="#fff" stroke-width="1.400"/>
<!-- orange up -->
<circle cx="203.500" cy="10.600" r="7.700" fill="#f7931a"/><circle cx="203.500" cy="10.600" r="6" fill="#fba62e" opacity=".7"/><path d="M203.500 6.200l3.700 4.100h-2.200v3.800h-3v-3.800h-2.200z" fill="#fff27a"/>
<!-- flag -->
<path d="M221.400 3.200v15.800" stroke="#fff" stroke-width="1.600"/><path d="M222.300 4.200c2.800-1.200 5.200.3 7.700 1.400 1.700.7 3.400.3 5.200-.4-1.200 1.900-2 3.800-4.600 4.300-2.800.5-5.200-1-8.300.6z" fill="#fdfdfd" stroke="#6a6040" stroke-width=".4"/>
</svg>
<div class="txt tk" style="left:1247px;top:13px;font-size:11.600px;letter-spacing:-.3px">РУС</div>
<div class="txt tk" style="left:1301px;top:6px;font-size:12px;letter-spacing:-.9px">16:07</div>
<div class="txt tk" style="left:1286px;top:23px;font-size:12px;letter-spacing:-.7px">26.05.2014</div>
<!--/TASK-->
</div>
</body>
</html>
